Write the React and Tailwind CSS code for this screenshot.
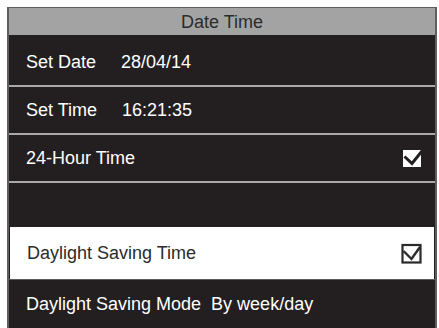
const font = { fontFamily: '"Liberation Sans", Arial, sans-serif' };

function CheckDark() {
  return (
    <svg width="22" height="20" viewBox="0 0 22 20">
      <rect x="1" y="2" width="18" height="17" fill="#ffffff" />
      <path d="M2.5 8.5 L10 15.5 L20 3" fill="none" stroke="#231f20" strokeWidth="3" />
    </svg>
  );
}

function CheckLight() {
  return (
    <svg width="22" height="21" viewBox="0 0 22 21">
      <rect x="1.5" y="2" width="18" height="17.5" fill="none" stroke="#2a2a2a" strokeWidth="2.2" />
      <path d="M2.5 8 L10.5 16 L19 4" fill="none" stroke="#2a2a2a" strokeWidth="2.4" />
    </svg>
  );
}

function Row({ label, value, check, className = "" }) {
  return (
    <div className={"flex items-center justify-between pl-[17px] pr-[11px] " + className}>
      <div className="flex items-center text-[18px] leading-none">
        <span>{label}</span>
        {value && <span className="ml-[25px]">{value}</span>}
      </div>
      {check}
    </div>
  );
}

export default function App() {
  return (
    <div className="h-[328px] w-[439px] overflow-hidden bg-white pl-[7px] pr-[2px] pt-[7px]" style={font}>
      <div className="h-full border-x-2 border-t border-[#5e5e5e] bg-[#231f20]">
        <div className="flex h-[27px] items-center justify-center bg-[#a3a3a3] text-[18px] leading-none text-[#2b2b2b]">
          Date Time
        </div>
        <Row label="Set Date" value="28/04/14" className="h-[50px] pt-[3px] text-white" />
        <div className="h-[2px] bg-[#a9a9a9]" />
        <Row label="Set Time" value="16:21:35" className="h-[46px] text-white" />
        <div className="h-[2px] bg-[#a9a9a9]" />
        <Row label="24-Hour Time" check={<CheckDark />} className="h-[46px] text-white" />
        <div className="h-[2px] bg-[#a9a9a9]" />
        <div className="h-[44px]" />
        <div className="px-[1px]">
          <Row label="Daylight Saving Time" check={<CheckLight />} className="h-[52px] bg-white pl-[15px] pr-[10px] text-[#2b2b2b]" />
        </div>
        <div className="h-[1px] bg-[#5a5a5a]" />
        <Row label="Daylight Saving Mode  By week/day" className="h-[47px] whitespace-pre text-white" />
      </div>
    </div>
  );
}
